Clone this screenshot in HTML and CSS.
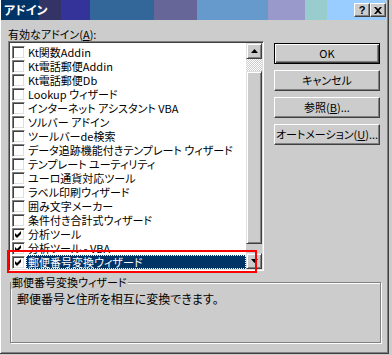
FILE: index.html
```html
<!DOCTYPE html>
<html lang="ja">
<head>
    <meta charset="UTF-8">
    <title>アドイン</title>
    <link rel="stylesheet" href="styles.css">
</head>
<body>
    <div class="window">
        <div class="titlebar">
            <span class="title">アドイン</span>
            <div class="title-buttons">
                <span class="tbtn">?</span>
                <span class="tbtn">
                    <svg width="8" height="7" viewBox="0 0 8 7"><path d="M0 0h2l2 2 2-2h2L5 3.5 8 7H6L4 5 2 7H0l3-3.5z" fill="#000"/></svg>
                </span>
            </div>
        </div>

        <div class="content">
            <div class="caption">有効なアドイン(<u>A</u>):</div>
            <div class="main">
                <div class="listbox">
                    <ul class="items">
                        <li class="item"><span class="box"></span><span class="label">Kt関数Addin</span></li>
                        <li class="item"><span class="box"></span><span class="label">Kt電話郵便Addin</span></li>
                        <li class="item"><span class="box"></span><span class="label">Kt電話郵便Db</span></li>
                        <li class="item"><span class="box"></span><span class="label">Lookup ウィザード</span></li>
                        <li class="item"><span class="box"></span><span class="label">インターネット アシスタント VBA</span></li>
                        <li class="item"><span class="box"></span><span class="label">ソルバー アドイン</span></li>
                        <li class="item"><span class="box"></span><span class="label">ツールバーde検索</span></li>
                        <li class="item"><span class="box"></span><span class="label">データ追跡機能付きテンプレート ウィザード</span></li>
                        <li class="item"><span class="box"></span><span class="label">テンプレート ユーティリティ</span></li>
                        <li class="item"><span class="box"></span><span class="label">ユーロ通貨対応ツール</span></li>
                        <li class="item"><span class="box"></span><span class="label">ラベル印刷ウィザード</span></li>
                        <li class="item"><span class="box"></span><span class="label">囲み文字メーカー</span></li>
                        <li class="item"><span class="box"></span><span class="label">条件付き合計式ウィザード</span></li>
                        <li class="item"><span class="box checked"><svg width="11" height="11" viewBox="0 0 11 11"><path d="M2 4l2 2 4-4v3l-4 4-2-2z" fill="#000"/></svg></span><span class="label">分析ツール</span></li>
                        <li class="item"><span class="box checked"><svg width="11" height="11" viewBox="0 0 11 11"><path d="M2 4l2 2 4-4v3l-4 4-2-2z" fill="#000"/></svg></span><span class="label">分析ツール - VBA</span></li>
                        <li class="item sel"><span class="box checked"><svg width="11" height="11" viewBox="0 0 11 11"><path d="M2 4l2 2 4-4v3l-4 4-2-2z" fill="#000"/></svg></span><span class="label">郵便番号変換ウィザード</span></li>
                    </ul>
                    <div class="scrollbar">
                        <div class="sb-btn"><svg width="7" height="4" viewBox="0 0 7 4"><path d="M0 4L3.5 0 7 4z" fill="#000"/></svg></div>
                        <div class="sb-track"></div>
                        <div class="sb-thumb"></div>
                        <div class="sb-gap"></div>
                        <div class="sb-btn"><svg width="7" height="4" viewBox="0 0 7 4"><path d="M0 0h7L3.5 4z" fill="#000"/></svg></div>
                    </div>
                    <div class="mark"></div>
                </div>

                <div class="buttons">
                    <div class="btn default">OK</div>
                    <div class="btn">キャンセル</div>
                    <div class="btn">参照(<u>B</u>)...</div>
                    <div class="btn">オートメーション(<u>U</u>)...</div>
                </div>
            </div>

            <div class="group">
                <div class="legend">郵便番号変換ウィザード</div>
                <p class="desc">郵便番号と住所を相互に変換できます。</p>
            </div>
        </div>
    </div>
</body>
</html>
```

FILE: styles.css
```css
* {
    box-sizing: border-box;
}
body {
    margin: 0;
    width: 392px;
    height: 355px;
    overflow: hidden;
    background-color: #cccccc;
    font-family: "Noto Sans CJK JP", sans-serif;
    font-size: 11px;
    font-feature-settings: "palt" 1;
    color: #000;
}
.window {
    width: 389px;
    height: 354px;
    border-right: 1px solid #404040;
    border-bottom: 1px solid #404040;
    box-shadow: inset 1px 0 #fff, inset -1px -1px #808080;
}

/* title bar with the striped gradient */
.titlebar {
    display: flex;
    align-items: center;
    justify-content: space-between;
    height: 20px;
    margin: 0 2px 0 1px;
    background: linear-gradient(to right,
        #003366 0 38px, #333366 38px 60px, #333399 60px 89px,
        #336699 89px 153px, #666699 153px 196px, #6699cc 196px 267px,
        #9999cc 267px 304px, #99cccc 304px 326px, #99ccff 326px);
}
.title {
    padding-left: 3px;
    color: #fff;
    font-weight: bold;
    font-size: 12px;
    line-height: 20px;
}
.title-buttons {
    display: flex;
}
.tbtn {
    display: flex;
    align-items: center;
    justify-content: center;
    width: 16px;
    height: 14px;
    background-color: #cccccc;
    border: 1px solid;
    border-color: #fff #404040 #404040 #fff;
    box-shadow: inset -1px -1px #808080;
    font: bold 11px "Liberation Sans", sans-serif;
}

.content {
    padding: 8px 0 0 8px;
}
.caption {
    height: 13px;
    line-height: 13px;
}
.main {
    display: flex;
    align-items: flex-start;
}

/* list box */
.listbox {
    position: relative;
    display: flex;
    width: 256px;
    height: 230px;
    padding: 1px;
    background-color: #fff;
    border: 1px solid;
    border-color: #808080 #fff #fff #808080;
    box-shadow: inset 1px 1px #404040, inset -1px -1px #dfdfdf;
}
.items {
    list-style: none;
    margin: 0;
    padding: 2px 0 0 2px;
    width: 236px;
    overflow: hidden;
}
.item {
    display: flex;
    align-items: center;
    height: 14px;
    white-space: nowrap;
}
.box {
    flex: none;
    width: 13px;
    height: 13px;
    margin-right: 1px;
    background-color: #fff;
    border: 1px solid;
    border-color: #808080 #fff #fff #808080;
    box-shadow: inset 1px 1px #404040, inset -1px -1px #dfdfdf;
}
.box svg {
    display: block;
}
.label {
    flex: 1;
    height: 14px;
    line-height: 14px;
    padding-left: 2px;
}
.item.sel .label {
    background-color: #003366;
    color: #fff;
    outline: 1px dotted #fff;
    outline-offset: -1px;
}

/* scroll bar */
.scrollbar {
    display: flex;
    flex-direction: column;
    width: 16px;
}
.sb-btn, .sb-thumb {
    background-color: #cccccc;
    border: 1px solid;
    border-color: #dfdfdf #404040 #404040 #dfdfdf;
    box-shadow: inset 1px 1px #fff, inset -1px -1px #808080;
}
.sb-btn {
    display: flex;
    align-items: center;
    justify-content: center;
    height: 16px;
}
.sb-track {
    height: 12px;
    background: repeating-conic-gradient(#fff 0 25%, #cccccc 0 50%) 0 0 / 2px 2px;
}
.sb-thumb {
    height: 173px;
}
.sb-gap {
    height: 9px;
    background-color: #cccccc;
}

/* red highlight drawn over the selected row */
.mark {
    position: absolute;
    left: -2px;
    top: 208px;
    width: 250px;
    height: 23px;
    border: 2px solid #ff0000;
}

/* push buttons */
.buttons {
    display: flex;
    flex-direction: column;
    gap: 6px;
    width: 106px;
    margin: 2px 0 0 10px;
}
.btn {
    height: 21px;
    line-height: 19px;
    text-align: center;
    white-space: nowrap;
    background-color: #cccccc;
    border: 1px solid;
    border-color: #fff #404040 #404040 #fff;
    box-shadow: inset -1px -1px #808080;
}
.btn.default {
    border-color: #000;
    box-shadow: inset 1px 1px #fff, inset -1px -1px #404040, inset -2px -2px #808080;
}

/* description group box */
.group {
    width: 371px;
    height: 61px;
    margin: 11px 0 0 2px;
    border: 1px solid #808080;
    box-shadow: 1px 1px 0 #fff, inset 1px 1px 0 #fff;
}
.legend {
    width: max-content;
    margin-top: -8px;
    padding: 0 1px;
    line-height: 14px;
    background-color: #cccccc;
}
.desc {
    margin: 3px 0 0 6px;
    font-size: 12px;
    line-height: 14px;
}
```
